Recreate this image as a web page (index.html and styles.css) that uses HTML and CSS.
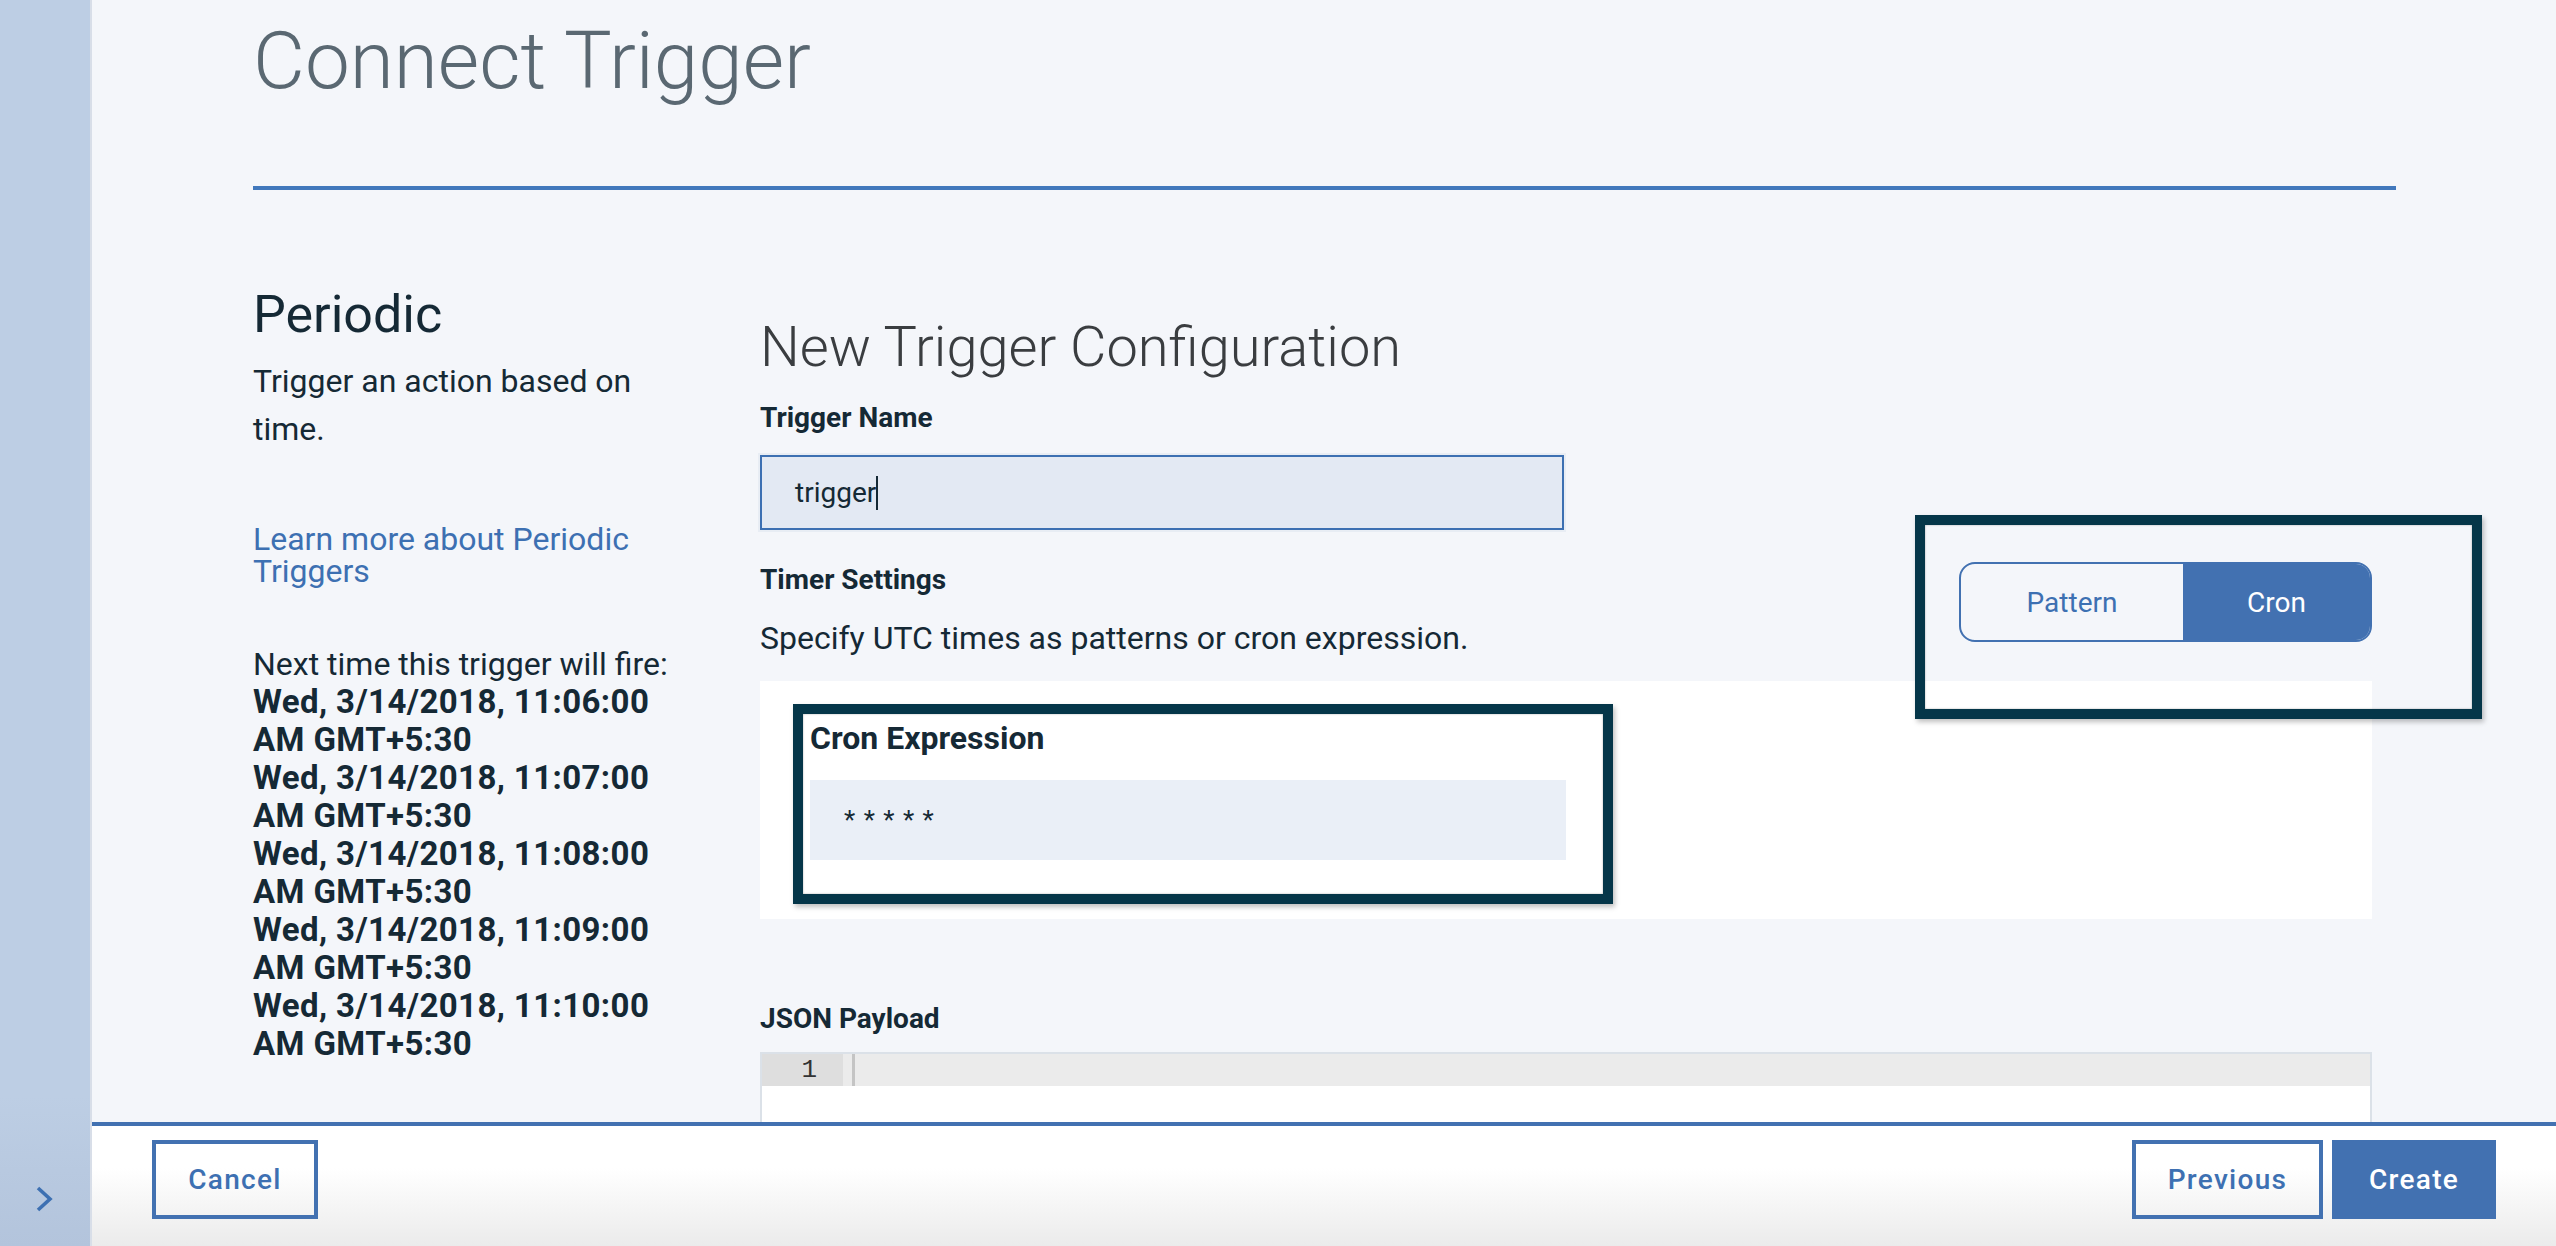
FILE: index.html
```html
<!DOCTYPE html>
<html lang="en">
<head>
<meta charset="utf-8">
<title>Connect Trigger</title>
<link rel="stylesheet" href="styles.css">
</head>
<body>
<div class="app">
  <aside class="sidebar">
    <svg class="chev" viewBox="0 0 17 26" aria-hidden="true"><polyline points="2,2 14,13 2,24" fill="none" stroke="#3d70b2" stroke-width="3.6"/></svg>
  </aside>
  <div class="main">
    <div class="scroll">
      <header class="page-head">
        <h1 class="page-title">Connect Trigger</h1>
      </header>
      <div class="layout">
        <section class="info">
          <h2 class="info-title">Periodic</h2>
          <p class="info-desc">Trigger an action based on time.</p>
          <a class="info-link" href="#">Learn more about Periodic Triggers</a>
          <div class="next">
            <div class="next-label">Next time this trigger will fire:</div>
            <div class="next-time">Wed, 3/14/2018, 11:06:00<br>AM GMT+5:30</div>
            <div class="next-time">Wed, 3/14/2018, 11:07:00<br>AM GMT+5:30</div>
            <div class="next-time">Wed, 3/14/2018, 11:08:00<br>AM GMT+5:30</div>
            <div class="next-time">Wed, 3/14/2018, 11:09:00<br>AM GMT+5:30</div>
            <div class="next-time">Wed, 3/14/2018, 11:10:00<br>AM GMT+5:30</div>
          </div>
        </section>
        <section class="config">
          <h2 class="config-title">New Trigger Configuration</h2>
          <div class="field-label">Trigger Name</div>
          <div class="text-input"><span>trigger</span><span class="caret"></span></div>
          <div class="timer">
            <div class="timer-text">
              <div class="field-label flush">Timer Settings</div>
              <p class="timer-desc">Specify UTC times as patterns or cron expression.</p>
            </div>
            <div class="toggle">
              <span class="toggle-opt">Pattern</span>
              <span class="toggle-opt active">Cron</span>
              <div class="callout-ring"></div>
            </div>
          </div>
          <div class="panel">
            <div class="callout">
              <div class="cron-label">Cron Expression</div>
              <div class="cron-input">* * * * *</div>
            </div>
          </div>
          <div class="field-label json-label">JSON Payload</div>
          <div class="editor">
            <div class="editor-line">
              <span class="gutter">1</span>
              <span class="cursor"></span>
            </div>
          </div>
        </section>
      </div>
    </div>
    <footer class="footer">
      <button class="btn btn-cancel" type="button">Cancel</button>
      <div class="footer-right">
        <button class="btn btn-prev" type="button">Previous</button>
        <button class="btn btn-create" type="button">Create</button>
      </div>
    </footer>
  </div>
</div>
</body>
</html>
```
FILE: styles.css
```css
html, body {
  margin: 0;
  height: 100%;
}
body {
  font-family: Roboto, "Liberation Sans", sans-serif;
  color: #152935;
  background: #f4f6fa;
}
.app {
  display: flex;
  height: 1246px;
  overflow: hidden;
}
.sidebar {
  width: 92px;
  flex: none;
  box-sizing: border-box;
  background: linear-gradient(to bottom, #bdcee4 0, #bdcee4 88%, #b3c4dc 100%);
  border-right: 2px solid #d8dee8;
  display: flex;
  flex-direction: column;
  justify-content: flex-end;
  padding: 0 0 34px 36px;
}
.chev {
  width: 17px;
  height: 26px;
}
.main {
  flex: 1;
  min-width: 0;
  display: flex;
  flex-direction: column;
}
.scroll {
  flex: 1;
  overflow: hidden;
  padding: 0 160px 0 161px;
}
.page-head {
  padding: 13px 0 77px;
  border-bottom: 4px solid #4178bc;
}
.page-title {
  margin: 0;
  font-size: 80px;
  line-height: 96px;
  font-weight: 300;
  color: #5a6872;
}
.layout {
  display: grid;
  grid-template-columns: 440px 1612px;
  column-gap: 67px;
  align-items: start;
  margin-top: 95px;
}
.info-title {
  margin: 0;
  font-size: 52px;
  line-height: 60px;
  font-weight: 400;
}
.info-desc {
  margin: 12px 0 0;
  font-size: 32px;
  line-height: 48px;
}
.info-link {
  display: block;
  margin-top: 70px;
  font-size: 32px;
  line-height: 32px;
  color: #3d70b2;
  text-decoration: none;
}
.next {
  margin-top: 58px;
  font-size: 32px;
  line-height: 38px;
}
.next-time {
  font-weight: 700;
  font-size: 33px;
  letter-spacing: 0.4px;
}
.config {
  padding-top: 30px;
}
.config-title {
  margin: 0;
  font-size: 56px;
  line-height: 64px;
  font-weight: 300;
  color: #3a3d40;
}
.field-label {
  margin-top: 23px;
  font-size: 28px;
  line-height: 32px;
  font-weight: 700;
}
.field-label.flush {
  margin-top: 0;
}
.text-input {
  margin-top: 21px;
  width: 804px;
  height: 75px;
  box-sizing: border-box;
  border: 2px solid #3d70b2;
  background: #e3e9f3;
  display: flex;
  align-items: center;
  padding-left: 33px;
  font-size: 28px;
  outline: 2px solid #e8edf4;
}
.caret {
  width: 2px;
  height: 34px;
  background: #152935;
}
.timer {
  margin-top: 34px;
  display: flex;
  justify-content: space-between;
  align-items: flex-start;
}
.timer-desc {
  margin: 22px 0 0;
  font-size: 32px;
  line-height: 40px;
}
.toggle {
  position: relative;
  margin-top: -2px;
  display: flex;
  width: 413px;
  height: 80px;
  box-sizing: border-box;
  border: 2px solid #4271b1;
  border-radius: 16px;
  font-size: 28px;
}
.toggle-opt {
  display: flex;
  align-items: center;
  justify-content: center;
  width: 222px;
  color: #3d70b2;
}
.toggle-opt.active {
  flex: 1;
  background: #4271b1;
  color: #fff;
  border-radius: 0 14px 14px 0;
}
.callout-ring {
  position: absolute;
  left: -46px;
  top: -49px;
  right: -112px;
  bottom: -79px;
  border: 10px solid #053649;
  box-shadow: 2px 3px 5px rgba(0, 0, 0, 0.25), inset 0 0 2px rgba(0, 0, 0, 0.35);
  z-index: 2;
}
.panel {
  margin-top: 23px;
  background: #fff;
  padding: 23px 0 15px 33px;
}
.callout {
  width: 820px;
  box-sizing: border-box;
  border: 10px solid #053649;
  padding: 6px 37px 34px 7px;
  box-shadow: 2px 3px 5px rgba(0, 0, 0, 0.25), inset 0 0 2px rgba(0, 0, 0, 0.35);
}
.cron-label {
  font-size: 32px;
  line-height: 36px;
  font-weight: 700;
}
.cron-input {
  margin-top: 24px;
  height: 80px;
  background: #eaeff7;
  display: flex;
  align-items: center;
  padding-left: 34px;
  font-size: 26px;
  letter-spacing: 1px;
}
.json-label {
  margin-top: 84px;
}
.editor {
  margin-top: 17px;
  height: 200px;
  border: 2px solid #dbe1e8;
  border-bottom: none;
  background: #fff;
}
.editor-line {
  display: flex;
  height: 32px;
  background: #ebebeb;
}
.gutter {
  width: 81px;
  box-sizing: border-box;
  background: #dedede;
  text-align: right;
  padding-right: 26px;
  font-family: "Liberation Mono", "DejaVu Sans Mono", monospace;
  font-size: 26px;
  line-height: 32px;
  color: #333;
}
.cursor {
  margin-left: 9px;
  width: 3px;
  background: #c4c4c4;
}
.footer {
  flex: none;
  height: 124px;
  box-sizing: border-box;
  border-top: 4px solid #4271b1;
  background: linear-gradient(to bottom, #fff 0, #fff 35%, #ebebeb 100%);
  display: flex;
  justify-content: space-between;
  align-items: flex-start;
  padding: 14px 60px 0;
}
.footer-right {
  display: flex;
  gap: 9px;
}
.btn {
  height: 79px;
  box-sizing: border-box;
  border: 4px solid #4271b1;
  background: transparent;
  color: #3d70b2;
  font-family: Roboto, "Liberation Sans", sans-serif;
  font-size: 28px;
  font-weight: 500;
  letter-spacing: 1.3px;
  padding: 0;
}
.btn-cancel {
  width: 166px;
}
.btn-prev {
  width: 191px;
}
.btn-create {
  width: 164px;
  background: #4271b1;
  color: #fff;
}
```
